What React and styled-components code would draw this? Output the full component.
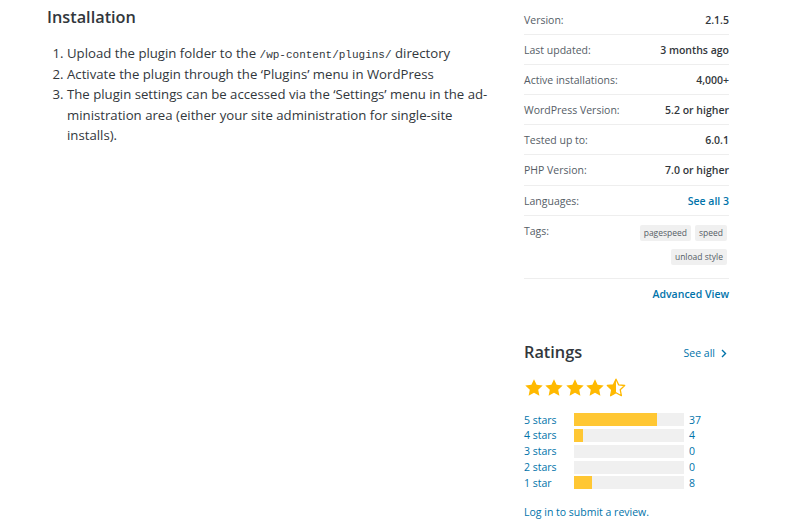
import React from "react";
import styled, { createGlobalStyle } from "styled-components";

const Global = createGlobalStyle`
  html, body { margin: 0; padding: 0; background: #fff; }
  body { font-family: "Open Sans", "Noto Sans", sans-serif; color: #32373c; }
`;

const Page = styled.div`
  display: flex;
  width: 800px;
  height: 530px;
  overflow: hidden;
`;

const Main = styled.main`
  width: 440px;
  padding: 6px 0 0 47px;
`;

const Heading = styled.h2`
  margin: 0;
  font-size: 16.3px;
  font-weight: 600;
  line-height: 22px;
  color: #32373c;
`;

const Steps = styled.ol`
  margin: 15px -10px 0 0;
  padding: 0 0 0 20px;
  font-size: 13.2px;
  line-height: 20.5px;
  color: #32373c;
`;

const Code = styled.code`
  font-family: "Liberation Mono", "DejaVu Sans Mono", monospace;
  font-size: 11px;
  line-height: 1;
`;

const Sidebar = styled.aside`
  margin-left: 37px;
  width: 205px;
  padding-top: 5px;
`;

const Meta = styled.ul`
  list-style: none;
  margin: 0;
  padding: 0;
`;

const Row = styled.li`
  display: flex;
  justify-content: space-between;
  align-items: flex-start;
  padding: 6px 0 5.1px;
  border-bottom: 1px solid #eeeeee;
  font-size: 10.5px;
  line-height: 18px;
`;

const Label = styled.span`
  color: #555d66;
`;

const Value = styled.strong`
  font-weight: 600;
  color: ${(p) => (p.$link ? "#0073aa" : "#32373c")};
`;

const Tags = styled.div`
  display: flex;
  flex-wrap: wrap;
  justify-content: flex-end;
  gap: 8px 4px;
  width: 120px;
  margin: 3px 2px 8px 0;
`;

const Tag = styled.span`
  display: inline-block;
  background: #f0f0f0;
  color: #555d66;
  font-size: 8.5px;
  line-height: 16px;
  height: 16px;
  padding: 0 4px;
  border-radius: 2px;
`;

const Advanced = styled.a`
  display: block;
  text-align: right;
  margin-top: 6px;
  font-size: 10.5px;
  line-height: 18px;
  font-weight: 600;
  color: #0073aa;
  text-decoration: none;
`;

const Ratings = styled.section`
  margin-top: 37px;
`;

const RatingsHead = styled.div`
  display: flex;
  justify-content: space-between;
  align-items: center;
`;

const RatingsTitle = styled.h3`
  margin: 0;
  font-size: 16.3px;
  font-weight: 600;
  line-height: 24px;
  color: #32373c;
`;

const SeeAll = styled.a`
  display: flex;
  align-items: center;
  gap: 6px;
  margin: 3px 2px 0 0;
  font-size: 10.5px;
  color: #0073aa;
  text-decoration: none;
`;

const Stars = styled.div`
  display: flex;
  gap: 0.4px;
  margin-top: 14px;
  height: 20px;
`;

const Bars = styled.ul`
  list-style: none;
  margin: 14px 0 0;
  padding: 0;
`;

const BarRow = styled.li`
  display: flex;
  align-items: center;
  height: 15.8px;
  font-size: 10.5px;
  color: #0073aa;
`;

const BarLabel = styled.span`
  width: 50px;
`;

const Track = styled.span`
  display: block;
  width: 110px;
  height: 13px;
  background: #f0f0f0;
`;

const Fill = styled.span`
  display: block;
  height: 100%;
  background: #ffc733;
`;

const Count = styled.span`
  margin-left: 5px;
  color: #0073aa;
`;

const Login = styled.a`
  display: block;
  margin-top: 14px;
  font-size: 10.5px;
  color: #0073aa;
  text-decoration: none;
`;

const STAR = "M10 1.2l2.6 5.6 6.1.7-4.5 4.2 1.2 6L10 14.7 4.6 17.7l1.2-6L1.3 7.5l6.1-.7z";

function Star({ half }) {
  return (
    <svg width="20" height="20" viewBox="0 0 20 20">
      <defs>
        <clipPath id="halfclip">
          <rect x="0" y="0" width="10" height="20" />
        </clipPath>
      </defs>
      {half ? (
        <>
          <path d={STAR} fill="none" stroke="#ffb900" strokeWidth="1.3" strokeLinejoin="round" />
          <path d={STAR} fill="#ffb900" clipPath="url(#halfclip)" />
        </>
      ) : (
        <path d={STAR} fill="#ffb900" />
      )}
    </svg>
  );
}

const meta = [
  ["Version:", "2.1.5"],
  ["Last updated:", "3 months ago"],
  ["Active installations:", "4,000+"],
  ["WordPress Version:", "5.2 or higher"],
  ["Tested up to:", "6.0.1"],
  ["PHP Version:", "7.0 or higher"],
];

const bars = [
  ["5 stars", 37],
  ["4 stars", 4],
  ["3 stars", 0],
  ["2 stars", 0],
  ["1 star", 8],
];
const total = 49;

export default function App() {
  return (
    <>
      <Global />
      <Page>
        <Main>
          <Heading>Installation</Heading>
          <Steps>
            <li>
              Upload the plugin folder to the <Code>/wp-content/plugins/</Code> directory
            </li>
            <li>Activate the plugin through the ‘Plugins’ menu in WordPress</li>
            <li>
              The plugin settings can be accessed via the ‘Settings’ menu in the ad-ministration area
              (either your site administration for single-site installs).
            </li>
          </Steps>
        </Main>
        <Sidebar>
          <Meta>
            {meta.map(([l, v]) => (
              <Row key={l}>
                <Label>{l}</Label>
                <Value>{v}</Value>
              </Row>
            ))}
            <Row>
              <Label>Languages:</Label>
              <Value $link>See all 3</Value>
            </Row>
            <Row>
              <Label>Tags:</Label>
              <Tags>
                <Tag>pagespeed</Tag>
                <Tag>speed</Tag>
                <Tag>unload style</Tag>
              </Tags>
            </Row>
          </Meta>
          <Advanced href="#">Advanced View</Advanced>
          <Ratings>
            <RatingsHead>
              <RatingsTitle>Ratings</RatingsTitle>
              <SeeAll href="#">
                See all
                <svg width="6" height="9" viewBox="0 0 6 9">
                  <path d="M1 1l3.5 3.5L1 8" fill="none" stroke="#0073aa" strokeWidth="1.4" />
                </svg>
              </SeeAll>
            </RatingsHead>
            <Stars>
              <Star />
              <Star />
              <Star />
              <Star />
              <Star half />
            </Stars>
            <Bars>
              {bars.map(([l, n]) => (
                <BarRow key={l}>
                  <BarLabel>{l}</BarLabel>
                  <Track>
                    <Fill style={{ width: `${(n / total) * 100}%` }} />
                  </Track>
                  <Count>{n}</Count>
                </BarRow>
              ))}
            </Bars>
            <Login href="#">Log in to submit a review.</Login>
          </Ratings>
        </Sidebar>
      </Page>
    </>
  );
}
